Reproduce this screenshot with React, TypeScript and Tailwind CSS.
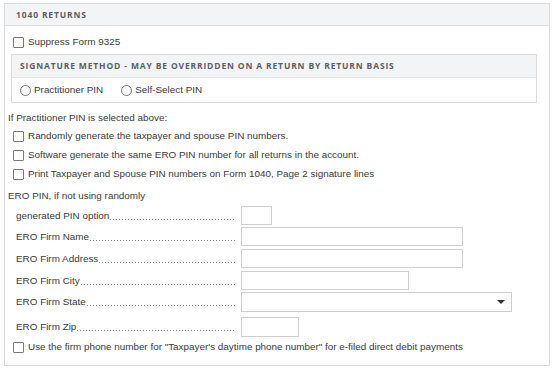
import React from "react";

function Check({ label }: { label: string }) {
  return (
    <div className="flex items-center h-[12px]">
      <span className="w-[11px] h-[11px] border border-[#7a7a7a] rounded-[1px] bg-white shrink-0" />
      <span className="ml-[4px] whitespace-nowrap">{label}</span>
    </div>
  );
}

function Radio({ label }: { label: string }) {
  return (
    <div className="flex items-center">
      <span className="w-[11px] h-[11px] border border-[#7a7a7a] rounded-full bg-white shrink-0" />
      <span className="ml-[3px] whitespace-nowrap">{label}</span>
    </div>
  );
}

function Row({
  label,
  inputW,
  h = "h-[19px]",
  mt,
  select,
}: {
  label: string;
  inputW: string;
  h?: string;
  mt: string;
  select?: boolean;
}) {
  return (
    <div className={`flex items-center ml-[11px] ${mt}`}>
      <div className="w-[220px] flex items-end whitespace-nowrap">
        <span>{label}</span>
        <div className="flex-1 h-[1px] mb-[2px] ml-[1px] bg-[linear-gradient(to_right,#8a8a8a_1px,transparent_1px)] bg-[length:3px_1px] bg-repeat-x" />
      </div>
      <div
        className={`ml-[5px] ${inputW} ${h} border border-[#cfcfcf] bg-white flex items-center justify-end`}
      >
        {select && (
          <svg width="8" height="4" viewBox="0 0 8 4" className="mr-[6px]">
            <polygon points="0,0 8,0 4,4" fill="#333" />
          </svg>
        )}
      </div>
    </div>
  );
}

export default function App() {
  return (
    <div
      className="bg-white w-[555px] h-[370px] pt-[3px] pl-[4px] text-[9.9px] leading-[12px] text-[#3a3a3a]"
      style={{ fontFamily: '"Liberation Sans", Arial, sans-serif' }}
    >
      <div className="w-[546px] h-[363px] border border-[#dcdcdc] flex flex-col">
        <div className="h-[22px] bg-[#f3f4f5] border-b border-[#dedede] flex items-center pl-[11px]">
          <span
            className="text-[8.5px] font-bold tracking-[0.1em] text-[#5c5f63]"
            style={{ fontFamily: '"Open Sans", sans-serif' }}
          >
            1040 RETURNS
          </span>
        </div>
        <div className="flex flex-col">
          <div className="mt-[10px] ml-[8px]">
            <Check label="Suppress Form 9325" />
          </div>
          <div className="mt-[6px] ml-[6px] w-[526px] border border-[#dcdcdc]">
            <div className="h-[23px] bg-[#f3f4f5] border-b border-[#e3e3e3] flex items-center pl-[8px]">
              <span
                className="text-[8.5px] font-bold tracking-[0.1em] text-[#5c5f63] whitespace-nowrap"
                style={{ fontFamily: '"Open Sans", sans-serif' }}
              >
                SIGNATURE METHOD - MAY BE OVERRIDDEN ON A RETURN BY RETURN BASIS
              </span>
            </div>
            <div className="h-[24px] flex items-center pl-[8px] gap-[18px]">
              <Radio label="Practitioner PIN" />
              <Radio label="Self-Select PIN" />
            </div>
          </div>
          <div className="mt-[9px] ml-[3px]">If Practitioner PIN is selected above:</div>
          <div className="mt-[6px] ml-[8px] flex flex-col gap-[7px]">
            <Check label="Randomly generate the taxpayer and spouse PIN numbers." />
            <Check label="Software generate the same ERO PIN number for all returns in the account." />
            <Check label="Print Taxpayer and Spouse PIN numbers on Form 1040, Page 2 signature lines" />
          </div>
          <div className="mt-[10px] ml-[3px]">ERO PIN, if not using randomly</div>
          <Row label="generated PIN option" inputW="w-[31px]" mt="mt-[4px]" />
          <Row label="ERO Firm Name" inputW="w-[222px]" mt="mt-[2px]" />
          <Row label="ERO Firm Address" inputW="w-[222px]" mt="mt-[3px]" />
          <Row label="ERO Firm City" inputW="w-[168px]" mt="mt-[3px]" />
          <Row label="ERO Firm State" inputW="w-[271px]" mt="mt-[2px]" h="h-[20px]" select />
          <Row label="ERO Firm Zip" inputW="w-[58px]" mt="mt-[5px]" h="h-[20px]" />
          <div className="mt-[4px] ml-[8px]">
            <Check label={'Use the firm phone number for "Taxpayer\'s daytime phone number" for e-filed direct debit payments'} />
          </div>
        </div>
      </div>
    </div>
  );
}
